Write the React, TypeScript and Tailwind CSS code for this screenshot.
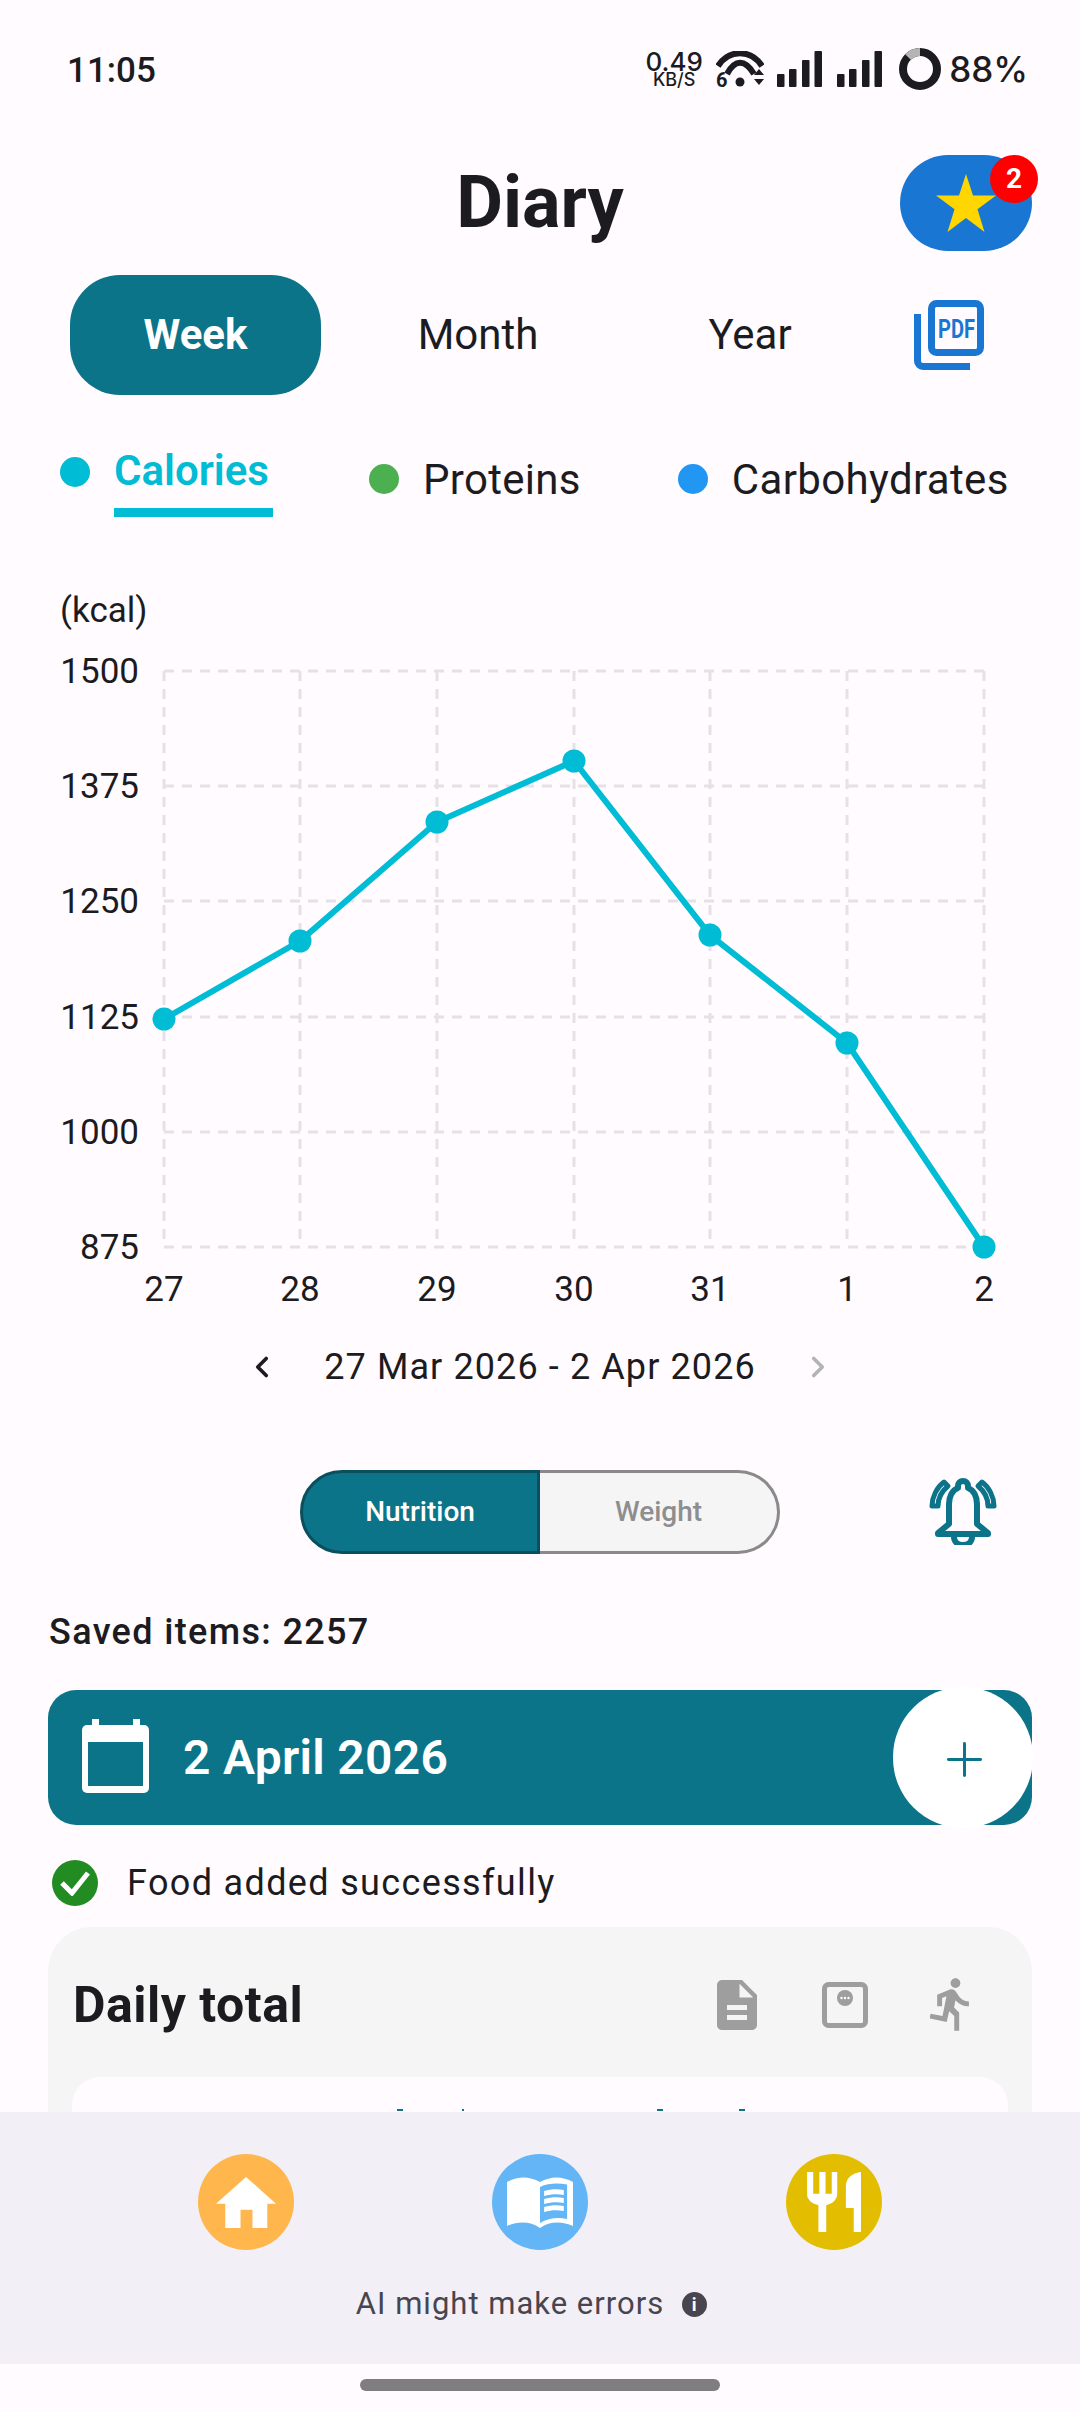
import { ChevronLeft, ChevronRight, Plus } from "lucide-react";

const teal = "#0c7489";

// calories for the selected week, already mapped to chart pixels
const points = [
  [164, 1019],
  [300, 941],
  [437, 822],
  [574, 761],
  [710, 935],
  [847, 1043],
  [984, 1247],
];
const gridX = [164, 300, 437, 574, 710, 847, 984];
const gridY = [
  { y: 671, label: "1500" },
  { y: 786, label: "1375" },
  { y: 901, label: "1250" },
  { y: 1017, label: "1125" },
  { y: 1132, label: "1000" },
  { y: 1247, label: "875" },
];
const xLabels = ["27", "28", "29", "30", "31", "1", "2"];

function SignalBars() {
  return (
    <svg width="45" height="36" viewBox="0 0 45 36" fill="#1c1b1f">
      <rect x="0" y="23" width="7.5" height="13" rx="1" />
      <rect x="12" y="18" width="7.5" height="18" rx="1" />
      <rect x="25" y="9" width="7.5" height="27" rx="1" />
      <rect x="37.5" y="0" width="7.5" height="36" rx="1" />
    </svg>
  );
}

function StatusBar() {
  return (
    <div className="h-[140px] flex items-start justify-between pl-[67px] pr-[52px] pt-[47px] text-[#1c1b1f]">
      <span className="text-[35px] leading-[42px] font-medium mt-[3px]">11:05</span>
      <div className="flex items-center font-['Inter',sans-serif]">
        <div className="flex flex-col items-center w-[56px] mr-[14px]">
          <span className="text-[26px] leading-[20px] font-medium">0.49</span>
          <span className="text-[18px] leading-[15px] font-medium">KB/S</span>
        </div>
        <svg width="48" height="44" viewBox="0 0 48 44" fill="none" stroke="#1c1b1f" className="mr-[13px] translate-y-[4px]">
          <path d="M2 15C13-2 35-2 46 15" strokeWidth="6" />
          <path d="M11 23C19 8 29 8 38 23" strokeWidth="6" />
          <circle cx="24" cy="31" r="4.5" fill="#1c1b1f" stroke="none" />
          <path d="M38 24h10l-5-6zM38 28h10l-5 6z" fill="#1c1b1f" stroke="none" />
          <text x="0" y="36" fontSize="20" fontWeight="700" fill="#1c1b1f" stroke="none" fontFamily="Roboto, sans-serif">6</text>
        </svg>
        <div className="mr-[15px]"><SignalBars /></div>
        <div className="mr-[17px]"><SignalBars /></div>
        <svg width="42" height="42" viewBox="0 0 42 42" fill="none" className="mr-[8px]">
          <circle cx="21" cy="21" r="17" stroke="#1c1b1f" strokeWidth="8" />
          <path d="M21 4A17 17 0 0 0 9 9" stroke="#b5b5b5" strokeWidth="8" />
        </svg>
        <span className="text-[35px] leading-[42px] font-medium">88%</span>
      </div>
    </div>
  );
}

function Header() {
  return (
    <div className="relative h-[96px] mt-[15px] flex items-center justify-center">
      <h1 className="text-[72px] leading-[96px] font-bold text-[#1c1b1f]">Diary</h1>
      <div className="absolute left-[900px] top-0 w-[132px] h-[96px] rounded-full bg-[#1976d2] flex items-center justify-center">
        <svg width="60" height="58" viewBox="0 0 60 58">
          <path d="M30 0l7 21.500h23l-18.500 13.800 7 22.700L30 44l-18.500 14 7-22.700L0 21.500h23z" fill="#ffd600" />
        </svg>
        <span className="absolute -right-[6px] top-0 w-[48px] h-[48px] rounded-full bg-[#ff0000] text-white text-[28px] font-bold flex items-center justify-center">
          2
        </span>
      </div>
    </div>
  );
}

function PeriodTabs() {
  return (
    <div className="flex items-center h-[120px] mt-[24px] pl-[70px]">
      <div className="w-[251px] h-[120px] rounded-[50px] pb-[2px] flex items-center justify-center text-white text-[42px] font-bold" style={{ backgroundColor: teal }}>
        Week
      </div>
      <span className="w-[156px] ml-[79px] -mt-[2px] text-center text-[42px] text-[#1c1b1f]">Month</span>
      <span className="w-[120px] ml-[134px] -mt-[2px] text-center text-[42px] text-[#1c1b1f]">Year</span>
      <svg width="70" height="70" viewBox="0 0 70 70" fill="none" stroke="#1976d2" strokeWidth="7" className="ml-[104px]">
        <rect x="17.500" y="3.500" width="49" height="49" rx="5" />
        <path d="M3.500 14V61a5.500 5.500 0 0 0 5.500 5.500H56" />
        <text x="42.500" y="38" textAnchor="middle" fontSize="25" fontWeight="700" fill="#1976d2" stroke="none" fontFamily="Roboto, sans-serif" textLength="37" lengthAdjust="spacingAndGlyphs">PDF</text>
      </svg>
    </div>
  );
}

function Legend() {
  return (
    <div className="flex items-start h-[132px] mt-[43px] text-[42px] text-[#1c1b1f]">
      <span className="w-[30px] h-[30px] rounded-full bg-[#00bcd4] ml-[60px] mt-[19px]" />
      <div className="ml-[24px] h-[79px] border-b-[9px] border-[#00bcd4] w-[159px] text-[#00bcd4] font-semibold leading-[66px]">
        Calories
      </div>
      <div className="flex items-center ml-[96px] h-[82px]">
        <span className="w-[30px] h-[30px] rounded-full bg-[#4caf50]" />
        <span className="ml-[24px] tracking-[0.3px]">Proteins</span>
      </div>
      <div className="flex items-center ml-[97px] h-[82px]">
        <span className="w-[30px] h-[30px] rounded-full bg-[#2196f3]" />
        <span className="ml-[24px] tracking-[0.35px] whitespace-nowrap">Carbohydrates</span>
      </div>
    </div>
  );
}

function Chart() {
  const line = points.map((p) => p.join(",")).join(" ");
  return (
    <svg width="1080" height="740" viewBox="0 570 1080 740" className="block" fontFamily="Roboto, sans-serif">
      <text x="60" y="622" fontSize="35" fill="#1c1b1f">(kcal)</text>
      {gridX.map((x) => (
        <line key={x} x1={x} x2={x} y1="671" y2="1247" stroke="#e6e1e5" strokeWidth="3" strokeDasharray="10 8" />
      ))}
      {gridY.map((g) => (
        <line key={g.y} x1="164" x2="984" y1={g.y} y2={g.y} stroke="#e6e1e5" strokeWidth="3" strokeDasharray="10 8" />
      ))}
      {gridY.map((g) => (
        <text key={g.label} x="139" y={g.y + 12} textAnchor="end" fontSize="35" fill="#1c1b1f">{g.label}</text>
      ))}
      {xLabels.map((l, i) => (
        <text key={l} x={gridX[i]} y="1301" textAnchor="middle" fontSize="35" fill="#1c1b1f">{l}</text>
      ))}
      <polyline points={line} fill="none" stroke="#00bcd4" strokeWidth="6" />
      {points.map(([x, y]) => (
        <circle key={x} cx={x} cy={y} r="11.500" fill="#00bcd4" />
      ))}
    </svg>
  );
}

function DateRange() {
  return (
    <div className="flex items-center justify-center h-[60px] mt-[27px] text-[#1c1b1f]">
      <ChevronLeft size={34} strokeWidth={2.600} />
      <span className="mx-[45px] text-[36px] tracking-[1.100px]">27 Mar 2026 - 2 Apr 2026</span>
      <ChevronRight size={34} strokeWidth={2.600} className="text-[#b4b4b4]" />
    </div>
  );
}

function Toggle() {
  return (
    <div className="relative flex justify-center mt-[73px] h-[84px]">
      <div className="w-[480px] h-[84px] flex text-[28px] font-medium">
        <div className="w-[240px] rounded-l-[42px] flex items-center justify-center text-white border-[3px] border-[#0a4f5e]" style={{ backgroundColor: teal }}>
          Nutrition
        </div>
        <div className="flex-1 rounded-r-[42px] flex items-center justify-center text-[#8e8e8e] bg-[#f5f5f5] border-[3px] border-l-0 border-[#8a8a8a]">Weight</div>
      </div>
      <svg width="70" height="68" viewBox="0 0 68 68" fill="none" stroke={teal} strokeWidth="6" strokeLinejoin="round" className="absolute left-[928px] top-[7px]">
        <path d="M34 4c-3 0-5 2-5 5v2C23 13 20 20 20 27v20L9 56v1h50v-1L48 47V27c0-7-3-14-9-16V9c0-3-2-5-5-5z" />
        <path d="M25 60c0 5 4 8 9 8s9-3 9-8" />
        <path d="M3 29C3 20 8 10 15 5l4 4C13 14 9 21 9 29z" strokeWidth="5" />
        <path d="M65 29C65 20 60 10 53 5l-4 4C55 14 59 21 59 29z" strokeWidth="5" />
      </svg>
    </div>
  );
}

function DateBar() {
  return (
    <div className="relative mx-[48px] mt-[36px] h-[135px] rounded-[28px] flex items-center pl-[34px]" style={{ backgroundColor: teal }}>
      <svg width="67" height="74" viewBox="0 0 67 74" className="-mt-[3px]">
        <rect x="0" y="6" width="67" height="68" rx="5" fill="#fff" />
        <rect x="6" y="23" width="55" height="44" fill={teal} />
        <rect x="10" y="0" width="7" height="8" fill="#fff" />
        <rect x="51" y="0" width="7" height="8" fill="#fff" />
      </svg>
      <span className="ml-[34px] text-white text-[48px] font-semibold tracking-[0.3px]">2 April 2026</span>
      <div className="absolute -right-[1px] -top-[3px] w-[140px] h-[141px] rounded-full bg-white pl-[2px] pt-[4px] flex items-center justify-center">
        <Plus size={55} strokeWidth={1.300} color={teal} />
      </div>
    </div>
  );
}

function DailyCard() {
  return (
    <div className="mx-[48px] mt-[21px] rounded-[44px] bg-[#f5f5f5] h-[300px] px-[24px]">
      <div className="flex items-center h-[150px] pt-[6px]">
        <h2 className="flex-1 ml-[1px] text-[50px] font-bold text-[#1c1b1f] tracking-[0.5px]">Daily total</h2>
        <svg width="40" height="50" viewBox="4 2 16 20" fill="#9e9e9e">
          <path d="M14 2H6c-1.100 0-1.990.9-1.990 2L4 20c0 1.100.89 2 1.990 2H18c1.100 0 2-.9 2-2V8l-6-6zm2 16H8v-2h8v2zm0-4H8v-2h8v2zm-3-5V3.500L18.500 9H13z" />
        </svg>
        <svg width="46" height="46" viewBox="0 0 46 46" fill="none" className="ml-[65px]">
          <rect x="2.500" y="2.500" width="41" height="41" rx="4" stroke="#9e9e9e" strokeWidth="5" />
          <circle cx="23" cy="16" r="8" fill="#9e9e9e" />
          <circle cx="19.500" cy="16" r="1.200" fill="#fff" />
          <circle cx="23" cy="16" r="1.200" fill="#fff" />
          <circle cx="26.500" cy="16" r="1.200" fill="#fff" />
        </svg>
        <svg width="42" height="54" viewBox="3.400 1.400 16.500 22.100" fill="#9e9e9e" className="ml-[62px] mr-[36px]">
          <path d="M13.490 5.480c1.100 0 2-.9 2-2s-.9-2-2-2-2 .9-2 2 .9 2 2 2zm-3.600 13.900l1-4.400 2.100 2v6h2v-7.500l-2.100-2 .6-3c1.300 1.500 3.300 2.500 5.500 2.500v-2c-1.900 0-3.500-1-4.300-2.400l-1-1.600c-.4-.6-1-1-1.700-1-.3 0-.5.1-.8.1l-5.200 2.200v4.700h2v-3.400l1.800-.7-1.600 8.100-4.900-1-.4 2 7 1.400z" />
        </svg>
      </div>
      <div className="h-[60px] rounded-t-[28px] bg-[#fffbfe] pt-[32px] flex items-start">
        <span className="ml-[325px] w-[6px] h-[2px]" style={{ backgroundColor: teal }} />
        <span className="ml-[59px] w-[2px] h-[2px]" style={{ backgroundColor: teal }} />
        <span className="ml-[193px] w-[6px] h-[2px]" style={{ backgroundColor: teal }} />
        <span className="ml-[76px] w-[6px] h-[2px]" style={{ backgroundColor: teal }} />
      </div>
    </div>
  );
}

function BottomNav() {
  return (
    <div className="h-[252px] shrink-0 bg-[#f2eff7] flex flex-col items-center pt-[42px]">
      <div className="flex w-[684px] justify-between">
        <div className="w-[96px] h-[96px] rounded-full bg-[#ffb74d] flex items-center justify-center">
          <svg width="60" height="51" viewBox="0 0 43.300 51" preserveAspectRatio="none" fill="#fff">
            <path d="M21.700 0L43.300 26.700H37V51H26.300V32.700H17.700V51H6.700V26.700H0z" />
          </svg>
        </div>
        <div className="w-[96px] h-[96px] rounded-full bg-[#64b5f6] flex items-center justify-center">
          <svg width="66" height="51" viewBox="0 0 48 51" preserveAspectRatio="none" fill="#fff">
            <path d="M0 5C8-1 16-1 24 5C32-1 40-1 48 5V49C40 44 31 44 24 51C17 44 8 44 0 49z" />
            <path d="M24 10C30 6 37 6 43.700 7.500V42C37 40 30 41 24 46z" fill="#64b5f6" />
            <path d="M27 14C32 12 37 12 41.300 13V18C37 17 32 17 27 19zM27 22C32 20 37 20 41.300 21V26C37 25 32 25 27 27zM27 30C32 28 37 28 41.300 29V34C37 33 32 33 27 35z" />
          </svg>
        </div>
        <div className="w-[96px] h-[96px] rounded-full bg-[#e3be00] flex items-center justify-center">
          <svg width="54" height="60" viewBox="0 0 39.300 60" preserveAspectRatio="none" fill="#fff">
            <path d="M0 0H4.500V21.700H9V0H13.500V21.700H18V0H22V22C22 28 18 32 14 33V60H8.300V33C4 32 0 28 0 22z" />
            <path d="M39.300 0V60H34V36H28.300V14C28.300 6 33 1 39.300 0z" />
          </svg>
        </div>
      </div>
      <div className="flex items-center mt-[31px] text-[31px] text-[#49454f] tracking-[1px] -ml-[17px]">
        <span>AI might make errors</span>
        <span className="ml-[18px] w-[25px] h-[25px] rounded-full bg-[#49454f] text-white text-[18px] font-bold flex items-center justify-center">i</span>
      </div>
    </div>
  );
}

export default function App() {
  return (
    <div className="w-[1080px] h-[2412px] bg-[#fffbfe] flex flex-col overflow-hidden font-['Roboto',sans-serif]">
      <div className="h-[2112px] shrink-0 overflow-hidden">
        <StatusBar />
        <Header />
        <PeriodTabs />
        <Legend />
        <Chart />
        <DateRange />
        <Toggle />
        <p className="mx-[49px] mt-[56px] h-[44px] text-[36px] leading-[44px] font-medium text-[#1c1b1f] tracking-[1.350px]">Saved items: 2257</p>
        <DateBar />
        <div className="flex items-center mx-[52px] mt-[35px] h-[46px]">
          <span className="w-[46px] h-[46px] rounded-full bg-[#228b22] flex items-center justify-center">
            <svg width="30" height="26" viewBox="0 0 30 26" fill="none" stroke="#fff" strokeWidth="5"><path d="M2 13l10 10L28 3" /></svg>
          </span>
          <span className="ml-[29px] text-[36px] text-[#1c1b1f] tracking-[1.350px]">Food added successfully</span>
        </div>
        <DailyCard />
      </div>
      <BottomNav />
      <div className="flex-1 flex justify-center pt-[15px]">
        <div className="w-[360px] h-[12px] rounded-full bg-[#7f7d80]" />
      </div>
    </div>
  );
}
